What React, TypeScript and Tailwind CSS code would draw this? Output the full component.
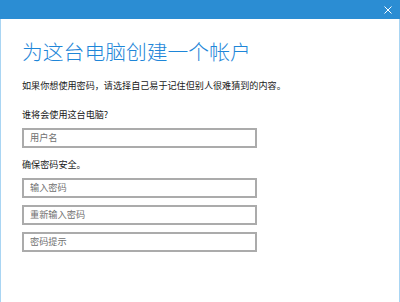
const font = { fontFamily: '"Noto Sans CJK SC", "Noto Sans", sans-serif' };

const Field = ({ placeholder }: { placeholder: string }) => (
  <div className="w-[235px] h-[20px] border-2 border-[#ababab] bg-white flex items-center px-[6px]">
    <span className="text-[9.2px] leading-none text-[#707070]">{placeholder}</span>
  </div>
);

export default function App() {
  return (
    <div className="w-[400px] h-[302px] bg-white flex flex-col overflow-hidden" style={font}>
      {/* Title bar */}
      <div className="h-[19px] bg-[#2b8dd3] flex items-center justify-end pr-[10px] shrink-0">
        <svg width="8" height="8" viewBox="0 0 8 8" className="mr-[-2px]">
          <path d="M0.5 0.5 L7.5 7.5 M7.5 0.5 L0.5 7.5" stroke="#ffffff" strokeWidth="1" />
        </svg>
      </div>

      <div className="flex-1 border-x border-[#a9d5f3] px-[21px] flex flex-col">
        <h1 className="mt-[22px] text-[20.8px] leading-none font-light text-[#1e86d8]">
          为这台电脑创建一个帐户
        </h1>
        <p className="mt-[17px] text-[9.1px] leading-[12px] text-[#1a1a1a]">
          如果你想使用密码，请选择自己易于记住但别人很难猜到的内容。
        </p>
        <p className="mt-[17px] text-[9.1px] leading-[12px] text-[#1a1a1a]">谁将会使用这台电脑?</p>
        <div className="mt-[8px]">
          <Field placeholder="用户名" />
        </div>
        <p className="mt-[10px] text-[9.1px] leading-[12px] text-[#1a1a1a]">确保密码安全。</p>
        <div className="mt-[8px] flex flex-col gap-[7px]">
          <Field placeholder="输入密码" />
          <Field placeholder="重新输入密码" />
          <Field placeholder="密码提示" />
        </div>
      </div>
    </div>
  );
}
